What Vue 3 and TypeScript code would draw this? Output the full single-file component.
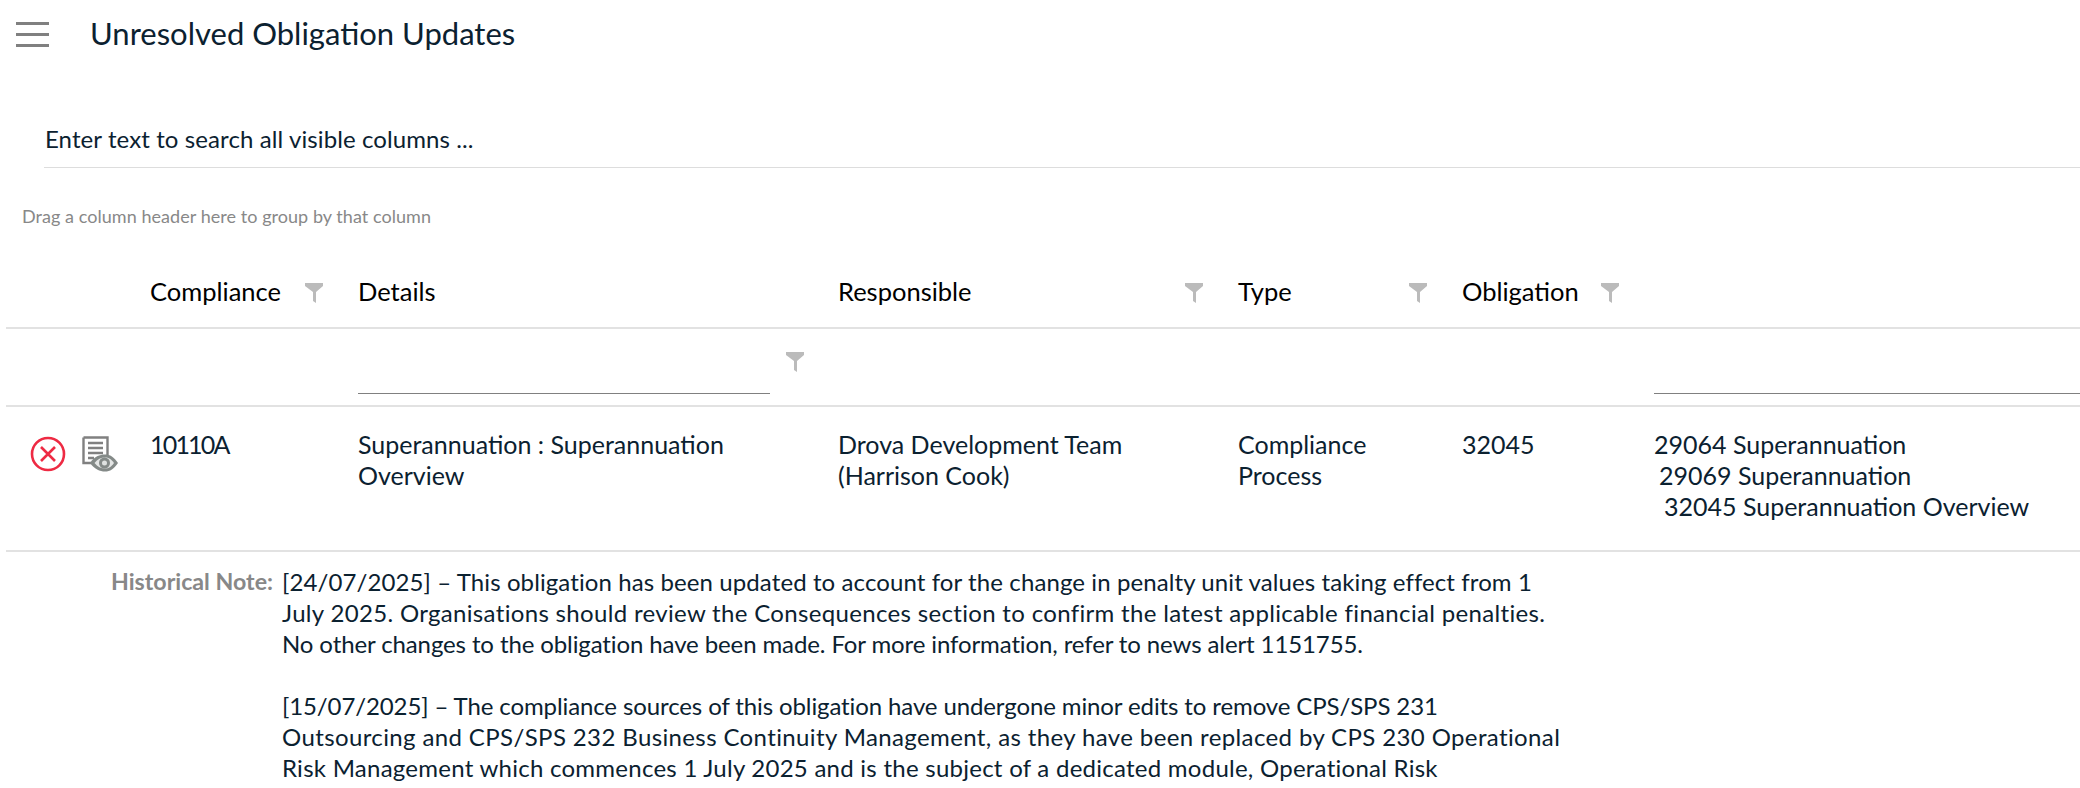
<script setup lang="ts">
const headers = [
  { label: 'Compliance', col: 'c1', filter: true },
  { label: 'Details', col: 'c2', filter: false },
  { label: 'Responsible', col: 'c3', filter: true },
  { label: 'Type', col: 'c4', filter: true },
  { label: 'Obligation', col: 'c5', filter: true },
]
const noteOne = [
  { text: '[24/07/2025] – This obligation has been updated to account for the change in penalty unit values taking effect from 1', ls: 0.1 },
  { text: 'July 2025. Organisations should review the Consequences section to confirm the latest applicable financial penalties.', ls: 0.33 },
  { text: 'No other changes to the obligation have been made. For more information, refer to news alert 1151755.', ls: -0.11 },
]
const noteTwo = [
  { text: '[15/07/2025] – The compliance sources of this obligation have undergone minor edits to remove CPS/SPS 231', ls: -0.11 },
  { text: 'Outsourcing and CPS/SPS 232 Business Continuity Management, as they have been replaced by CPS 230 Operational', ls: 0.38 },
  { text: 'Risk Management which commences 1 July 2025 and is the subject of a dedicated module, Operational Risk', ls: 0.255 },
]
</script>

<template>
  <div class="page">
    <header class="top">
      <div class="burger"><i></i><i></i><i></i></div>
      <h1>Unresolved Obligation Updates</h1>
    </header>
    <div class="search">Enter text to search all visible columns ...</div>
    <div class="group">Drag a column header here to group by that column</div>
    <div class="row head">
      <div class="c0"></div>
      <div v-for="h in headers" :key="h.label" :class="['cell', h.col]">
        <span>{{ h.label }}</span>
        <svg v-if="h.filter" class="funnel" viewBox="0 0 18 20"><path d="M0 0H18V3L11 9V20L8 18V9L0 3Z" /></svg>
      </div>
    </div>
    <div class="row filters">
      <div class="c0"></div>
      <div class="c1"></div>
      <div class="fbox"><div class="line l1"></div><svg class="funnel" viewBox="0 0 18 20"><path d="M0 0H18V3L11 9V20L8 18V9L0 3Z" /></svg></div>
      <div class="line l2"></div>
    </div>
    <div class="row data">
      <div class="c0 icons">
        <svg class="x" viewBox="0 0 36 36"><circle cx="18" cy="18" r="16" /><path d="M11 11L25 25M25 11L11 25" /></svg>
        <svg class="doc" viewBox="0 0 36 36">
          <path class="paper" d="M1.5 1.5H25.5V19M1.5 1.5V27H9" />
          <path class="paper" d="M6 7H21M6 12H21M6 17H21M6 22H12" />
          <path class="eye" d="M8 27C12 20.5 18 18.5 23 18.5S32 21 36 27C32 33 28 35.5 23 35.5S12 33 8 27Z" />
          <path class="eyein" d="M12.5 27C15.5 23 19 21.5 23 21.5S29 23 32 27C29 31 27 32.5 23 32.5S15.5 31 12.5 27Z" />
          <circle class="iris" cx="22.5" cy="27" r="4" />
        </svg>
      </div>
      <div class="cell c1 t code">10110A</div>
      <div class="cell c2 t">Superannuation : Superannuation Overview</div>
      <div class="cell c3 t">Drova Development Team (Harrison Cook)</div>
      <div class="cell c4 t">Compliance Process</div>
      <div class="cell c5 t">32045</div>
      <div class="cell c6 t">
        <div>29064 Superannuation</div>
        <div class="i1">29069 Superannuation</div>
        <div class="i2">32045 Superannuation Overview</div>
      </div>
    </div>
    <div class="note">
      <div class="nlabel">Historical Note:</div>
      <div class="ntext">
        <div v-for="l in noteOne" :key="l.text" :style="{ letterSpacing: l.ls + 'px' }">{{ l.text }}</div>
        <div class="gap"></div>
        <div v-for="l in noteTwo" :key="l.text" :style="{ letterSpacing: l.ls + 'px' }">{{ l.text }}</div>
      </div>
    </div>
  </div>
</template>

<style>
html, body { margin: 0; overflow: hidden; background: #fff; }
</style>

<style scoped>
.page {
  width: 2080px; height: 788px; overflow: hidden; background: #fff;
  font-family: Lato, "Noto Sans", sans-serif; color: #0b2130; font-size: 25px; line-height: 31px;
}
.top { display: flex; align-items: center; height: 68px; padding-left: 16px; }
.burger { display: flex; flex-direction: column; gap: 8px; width: 33px; margin-right: 41px; }
.burger i { display: block; height: 3px; background: #808080; }
h1 { margin: 0 0 2px; font-size: 31px; font-weight: 400; line-height: 36px; }
.search { margin: 57px 0 0 44px; padding-left: 1px; height: 42px; border-bottom: 1px solid #ddd; font-size: 24px; letter-spacing: .1px; line-height: 28px; }
.group { margin: 36px 0 0 22px; color: #888; font-size: 18px; letter-spacing: .05px; line-height: 24px; height: 48px; }
.row { display: flex; margin-left: 6px; border-bottom: 2px solid #e2e2e2; }
.head { height: 77px; padding-top: 24px; box-sizing: border-box; color: #000; font-size: 25.5px; }
.filters { height: 78px; box-sizing: border-box; position: relative; }
.data { height: 145px; box-sizing: border-box; padding-top: 22px; }
.c0 { width: 144px; flex: none; }
.c1 { width: 208px; flex: none; }
.c2 { width: 480px; flex: none; }
.c3 { width: 400px; flex: none; }
.c4 { width: 224px; flex: none; }
.c5 { width: 192px; flex: none; }
.c6 { flex: none; width: 420px; }
.cell { position: relative; box-sizing: border-box; padding-right: 16px; }
.code { letter-spacing: -1.8px; }
.head .cell { display: flex; justify-content: space-between; padding-right: 35px; align-items: flex-start; }
.funnel { width: 18px; height: 20px; fill: #bbb; margin-top: 7px; flex: none; }
.fbox { display: flex; width: 1296px; flex: none; align-items: flex-start; }
.line { background: #808080; height: 1px; margin-top: 64px; }
.l1 { width: 412px; }
.fbox .funnel { margin: 23px 0 0 16px; }
.l2 { flex: 1; }
.icons { display: flex; gap: 16px; padding: 7px 0 0 24px; box-sizing: border-box; }
.x { width: 36px; height: 36px; fill: none; stroke: #ee2a43; stroke-width: 2.6; }
.doc { width: 36px; height: 36px; }
.paper { fill: none; stroke: #808080; stroke-width: 2.4; }
.eye { fill: #848a88; }
.eyein { fill: #e4e6e5; }
.iris { fill: #dfe2e1; stroke: #848a88; stroke-width: 3; }
.i1 { padding-left: 5px; }
.i2 { padding-left: 10px; }
.note { display: flex; padding-top: 14px; }
.nlabel { width: 282px; box-sizing: border-box; text-align: right; color: #888; font-weight: 700; font-size: 23.2px; padding-right: 9px; flex: none; }
.ntext { font-size: 24px; }
.gap { height: 31px; }
</style>
